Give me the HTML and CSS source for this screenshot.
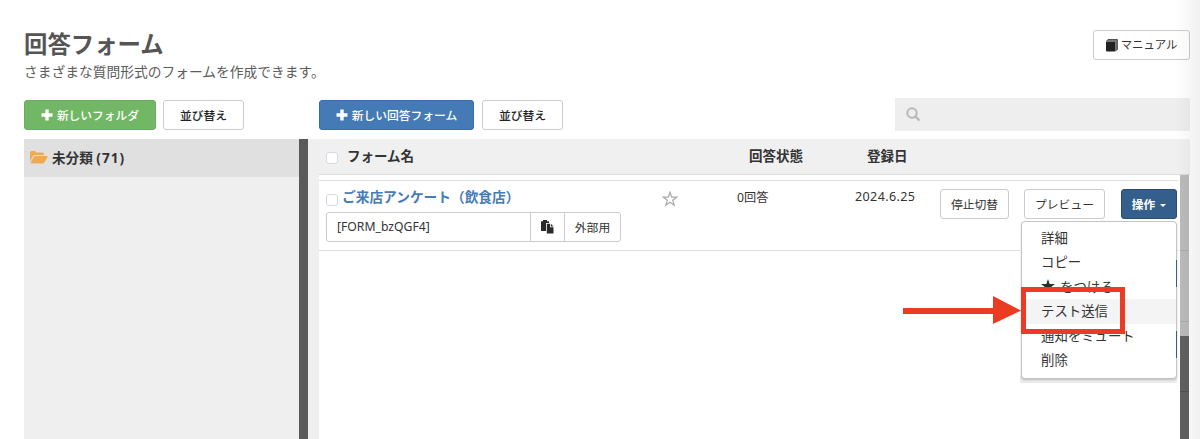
FILE: index.html
```html
<!DOCTYPE html>
<html lang="ja">
<head>
<meta charset="utf-8">
<title>回答フォーム</title>
<link rel="stylesheet" href="styles.css">
</head>
<body>
<div class="page">
  <header class="header">
    <div>
      <h1 class="title">回答フォーム</h1>
      <p class="lead">さまざまな質問形式のフォームを作成できます。</p>
    </div>
    <button class="btn manual"><svg width="12" height="13" viewBox="0 0 12 13"><path fill="#777" d="M0 2.500 2 .3h9.700v10L9.500 12.500z"/><path fill="#222" d="M0 3h9v9.500H1Q0 12.500 0 11.500z"/><path fill="none" stroke="#333" stroke-width=".7" d="M.3 2.400 2 .5h9.300v9.700L9.500 12"/></svg><span class="manual-text">マニュアル</span></button>
  </header>

  <div class="toolbar">
    <div class="tools-left">
      <button class="btn green"><svg width="12" height="12" viewBox="0 0 12 12"><path fill="#fff" d="M4.300.500h3.400v3.800h3.800v3.400H7.700v3.800H4.300V7.700H.5V4.300h3.800z"/></svg><span>新しいフォルダ</span></button>
      <button class="btn sort">並び替え</button>
    </div>
    <div class="tools-right">
      <button class="btn blue"><svg width="12" height="12" viewBox="0 0 12 12"><path fill="#fff" d="M4.300.500h3.400v3.800h3.800v3.400H7.700v3.800H4.300V7.700H.5V4.300h3.800z"/></svg><span>新しい回答フォーム</span></button>
      <button class="btn sort">並び替え</button>
      <div class="search"><svg width="15" height="15" viewBox="0 0 15 15"><circle cx="6" cy="6" r="4.700" fill="none" stroke="#b8b8b8" stroke-width="2"/><path d="m9.500 9.500 4 4" stroke="#b8b8b8" stroke-width="2.400"/></svg></div>
    </div>
  </div>

  <main class="panels">
    <aside class="sidebar">
      <div class="folders">
        <div class="folder"><svg width="18" height="13" viewBox="0 0 18 13"><path fill="#ecaa51" d="M0 10.500V1.500Q0 0 1.500 0h3Q6 0 6 1.500h6.500Q14 1.500 14 3v1H5Q3.500 4 2.700 5.300zM4.800 5H17q1 0 .5 1l-3.200 5.500q-.6 1-1.600 1H1.400q-1.200 0-.6-1L3.700 5.800Q4 5 4.800 5z"/></svg><span class="folder-name">未分類 <span class="count">(71)</span></span></div>
      </div>
      <div class="scroll-dark"></div>
    </aside>

    <section class="forms">
      <div class="table-head">
        <span class="check head-check"></span>
        <span class="col-name">フォーム名</span>
        <span class="col-state">回答状態</span>
        <span class="col-date">登録日</span>
      </div>
      <div class="table-body">
        <div class="rows">
          <div class="row">
            <div class="form-info">
              <div class="name-line"><span class="check"></span><a class="form-link">ご来店アンケート（飲食店）</a></div>
              <div class="code-group">
                <span class="code">[FORM_bzQGF4]</span>
                <span class="copy"><svg width="13" height="14" viewBox="0 0 13 14"><path fill="#2a2a2a" d="M0 1.200h2V0h4v1.200h2V3H5v8H0z"/><path fill="#2a2a2a" d="M5.800 3.800H9v3.500h3.500V13.500H5.800zM9.800 3.800l2.700 2.700H9.800z"/></svg></span>
                <span class="external">外部用</span>
              </div>
            </div>
            <svg class="star" width="16" height="16" viewBox="0 0 16 16"><path fill="none" stroke="#aaa" stroke-width="1.200" d="m8 1.200 1.700 4.900h5.200L10.700 9.200l1.600 5L8 11.200l-4.300 3 1.600-5L1.100 6.100h5.200z"/></svg>
            <span class="answers">0回答</span>
            <span class="date">2024.6.25</span>
            <button class="btn stop">停止切替</button>
            <button class="btn preview">プレビュー</button>
            <div class="action-wrap">
              <button class="btn action">操作<span class="caret"></span></button>
              <div class="menu-shade">
                <i class="peek peek-a"></i><i class="peek peek-b"></i>
                <ul class="menu">
                  <li>詳細</li>
                  <li>コピー</li>
                  <li class="fav"><svg width="14" height="14" viewBox="0 0 16 16"><path fill="#2c2c2c" d="m8 0 1.900 5.700H16l-4.900 3.600 1.800 5.900L8 11.600l-4.900 3.600 1.800-5.900L0 5.700h6.100z"/></svg>をつける</li>
                  <li class="active">テスト送信</li>
                  <li>通知をミュート</li>
                  <li>削除</li>
                </ul>
              </div>
            </div>
          </div>
        </div>
        <div class="scroll-track"><div class="scroll-light"><i class="tick"></i><i class="tick tick-low"></i></div><div class="scroll-dark-right"><i class="tick tick-dark"></i></div></div>
      </div>
    </section>
  </main>

  <svg class="arrow" width="119" height="30" viewBox="0 0 119 30"><path fill="#ec3b23" d="M0 13h90V1l28 14.500L90 29V19H0z"/></svg>
  <div class="highlight"></div>
  <div class="edge"></div>
</div>
</body>
</html>
```
FILE: styles.css
```css
* { box-sizing: border-box; }
body {
  margin: 0;
  background: #fff;
  color: #333;
  font: 13px/20px "Noto Sans", "Noto Sans CJK JP", sans-serif;
}
svg { display: block; flex: none; }
.page {
  position: relative;
  width: 1200px;
  height: 439px;
  padding: 30px 10px 0 24px;
  overflow: hidden;
  display: flex;
  flex-direction: column;
}
.header {
  height: 68px;
  flex: none;
  display: flex;
  justify-content: space-between;
  align-items: flex-start;
}
.title {
  margin: 0;
  color: #555;
  font-size: 23.4px;
  line-height: 28px;
  font-weight: 700;
}
.lead {
  margin: 4px 0 0;
  color: #5c5c5c;
  font-size: 13.750px;
  line-height: 20px;
}
.btn {
  flex: none;
  height: 30px;
  padding: 0;
  display: flex;
  align-items: center;
  justify-content: center;
  border: 1px solid #ccc;
  border-radius: 3px;
  background: #fff;
  color: #333;
  font-family: inherit;
  font-size: 12px;
  line-height: 18px;
  white-space: nowrap;
}
.manual { width: 97px; gap: 3px; }
.manual-text { font-size: 11.400px; }
.toolbar {
  height: 41px;
  flex: none;
  display: flex;
}
.tools-left, .tools-right { display: flex; gap: 8px; padding-top: 2px; }
.tools-left { width: 295px; gap: 7px; }
.tools-right { flex: 1; }
.green, .blue { gap: 4px; color: #fff; font-weight: 500; font-size: 11.750px; }
.green { width: 132px; background: #72b765; border-color: #68ae5b; }
.blue { width: 155px; background: #447bb6; border-color: #386da6; }
.sort { width: 81px; color: #222; font-weight: 500; font-size: 11.800px; }
.search {
  width: 295px;
  height: 33px;
  margin: -2px 0 0 auto;
  padding: 9px 11px;
  background: #eee;
}
.panels { flex: 1; display: flex; }
.sidebar {
  width: 295px;
  padding-right: 11px;
  display: flex;
  background: #efefef;
}
.folders { flex: 1; }
.folder {
  height: 38px;
  padding: 0 6px 1px;
  display: flex;
  align-items: center;
  gap: 4px;
  background: #e0e0e0;
}
.folder-name { font-size: 13.600px; font-weight: 700; }
.count { letter-spacing: 1px; }
.scroll-dark {
  width: 9px;
  background: #5a5a5a;
}
.forms { width: 871px; display: flex; flex-direction: column; }
.table-head {
  height: 36px;
  flex: none;
  padding: 7px 0 0 7px;
  display: flex;
  background: #f0f0f1;
  border-bottom: 1px solid #ddd;
  font-size: 13.500px;
  font-weight: 700;
}
.check {
  width: 12px;
  height: 12px;
  flex: none;
  border: 1px solid #d5dbe2;
  border-radius: 3px;
  background: #fff;
}
.head-check { margin-top: 6px; }
.col-name { width: 402px; margin-left: 9px; }
.col-state { width: 118px; }
.table-body { flex: 1; display: flex; }
.rows { flex: 1; padding-top: 5px; }
.row {
  height: 71px;
  padding: 0 0 0 7px;
  display: flex;
  align-items: flex-start;
  border-top: 1px solid #ddd;
  border-bottom: 1px solid #ddd;
}
.form-info { width: 336px; padding-top: 6px; }
.name-line { height: 20px; display: flex; gap: 4px; }
.name-line .check { margin-top: 7px; }
.form-link { color: #447bb8; font-size: 13.700px; font-weight: 700; }
.code-group {
  width: 295px;
  height: 30px;
  margin-top: 5px;
  display: flex;
  border: 1px solid #ccc;
  border-radius: 3px;
  line-height: 28px;
}
.code { width: 203px; padding-left: 10px; font-size: 12.200px; }
.copy {
  width: 35px;
  padding-right: 1px;
  display: flex;
  align-items: center;
  justify-content: center;
  border: 1px solid #ccc;
  border-width: 0 1px;
}
.external { flex: 1; text-align: center; font-size: 11.800px; }
.star { margin-top: 10px; }
.answers { width: 118px; margin: 7px 0 0 59px; font-size: 12.200px; }
.date { width: 85px; margin-top: 6px; font-size: 12.500px; letter-spacing: .4px; }
.stop { width: 69px; margin: 8px 15px 0 0; font-size: 11.800px; }
.preview { width: 81px; margin: 8px 16px 0 0; font-size: 11.800px; }
.action-wrap { position: relative; width: 56px; flex: none; padding-top: 8px; }
.action {
  width: 56px;
  gap: 5px;
  background: #345f8c;
  border-color: #284c75;
  color: #fff;
  font-size: 11.700px;
  font-weight: 700;
}
.caret {
  margin-top: 2px;
  border: 3.500px solid transparent;
  border-top-color: #fff;
  border-bottom: 0;
}
.menu-shade {
  position: absolute;
  z-index: 2;
  top: 40px;
  right: 0;
  width: 157px;
  height: 162px;
  background: linear-gradient(#fff 155px, #ebebeb 155px);
}
.menu {
  position: relative;
  width: 156px;
  height: 158px;
  margin: 0 0 0 1px;
  padding: 4px 0;
  list-style: none;
  background: #fff;
  border: 1px solid #c4c4c4;
  border-radius: 4px;
  box-shadow: 0 1px 2px rgba(0,0,0,.2);
  font-size: 13.400px;
  line-height: 24px;
}
.menu li { height: 24.400px; padding-left: 19px; }
.fav { display: flex; align-items: center; gap: 5px; }
.fav svg { margin-top: -2px; }
.menu .active { background: #f4f4f4; }
.peek {
  position: absolute;
  z-index: 1;
  right: 0;
  width: 1px;
  height: 27px;
  background: #345f8c;
}
.peek-a { top: 39px; }
.peek-b { top: 110px; }
.scroll-track { width: 9px; margin: 0 1px 0 2px; display: flex; flex-direction: column; }
.scroll-light { height: 161px; padding-top: 75px; background: #bbb; }
.scroll-dark-right { flex: 1; padding-top: 55px; background: #606060; }
.tick { display: block; height: 1px; background: #aaa; }
.tick-low { margin-top: 70px; }
.tick-dark { background: #505050; }
.arrow { position: absolute; z-index: 3; left: 903px; top: 295px; }
.highlight {
  position: absolute;
  z-index: 3;
  left: 1021px;
  top: 287px;
  width: 104px;
  height: 47px;
  border: 5px solid #ec3b23;
}
.edge {
  position: absolute;
  z-index: 4;
  right: 0;
  top: 0;
  width: 24px;
  height: 439px;
  background: linear-gradient(90deg, rgba(0,0,0,0), rgba(0,0,0,.06));
}
```
